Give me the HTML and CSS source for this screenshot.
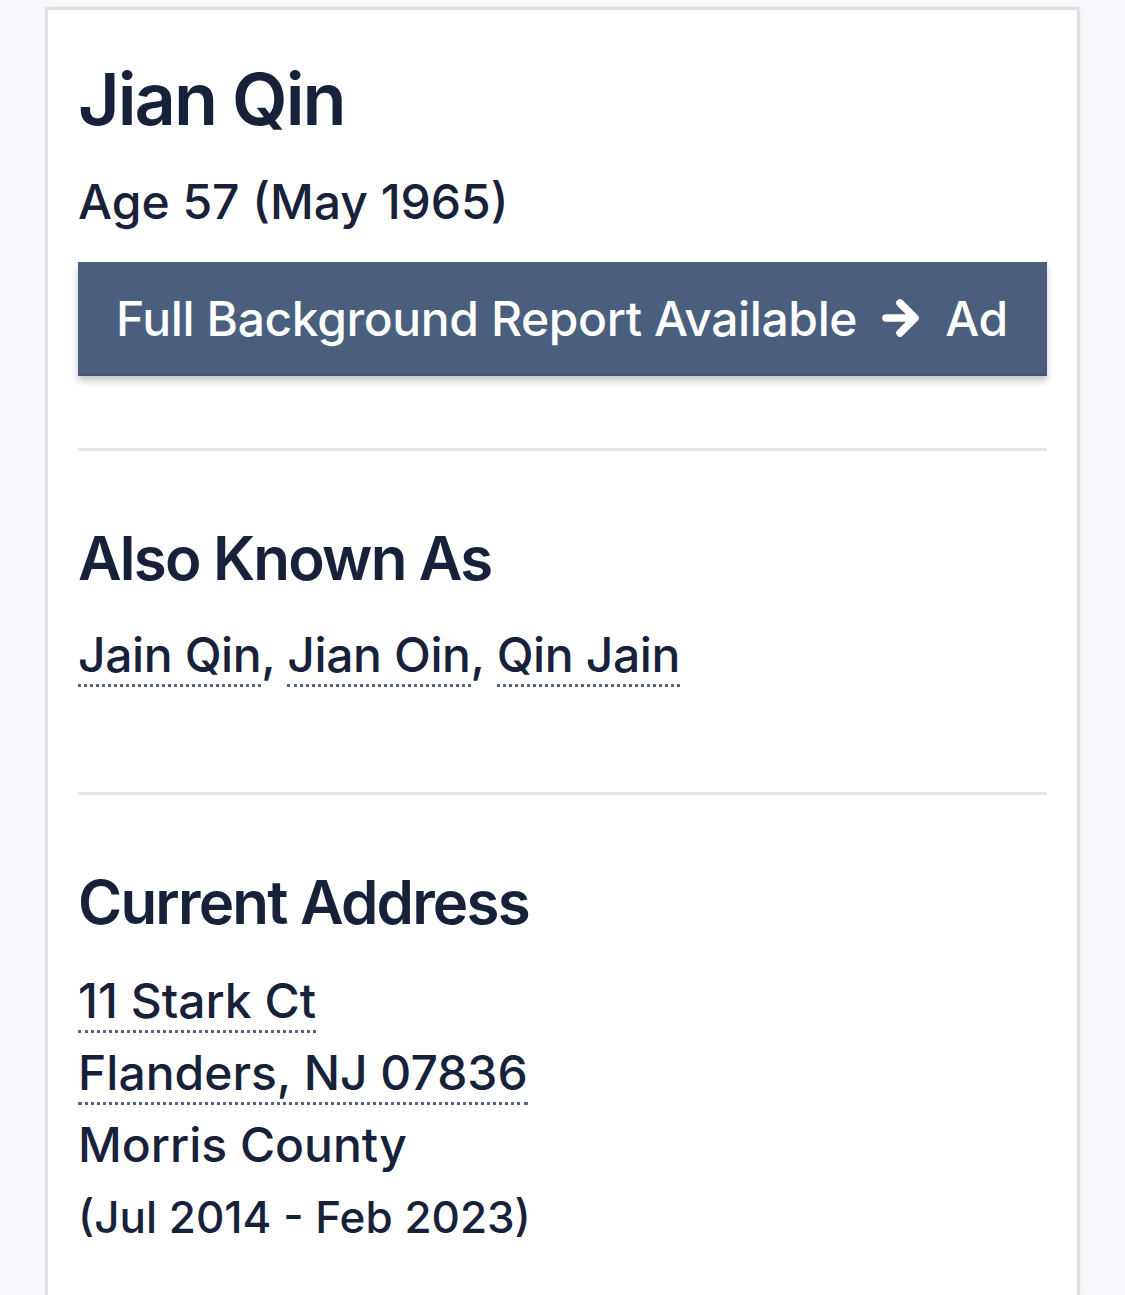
FILE: index.html
```html
<!DOCTYPE html>
<html lang="en">
<head>
<meta charset="utf-8">
<title>Jian Qin</title>
<link rel="stylesheet" href="styles.css">
</head>
<body>
<div class="card">
  <h1 class="name">Jian Qin</h1>
  <p class="age">Age 57 (May 1965)</p>
  <a class="report-btn" href="#">
    <span class="btn-text">Full Background Report Available</span>
    <svg class="arrow" viewBox="0 0 40 42" width="40" height="42" aria-hidden="true">
      <path d="M5 21 H32 M19 6 L34 21 L19 36" fill="none" stroke="#fff" stroke-width="7.5" stroke-linecap="round" stroke-linejoin="round"/>
    </svg>
    <span class="btn-ad">Ad</span>
  </a>
  <hr class="divider">
  <section class="section">
    <h2 class="heading">Also Known As</h2>
    <p class="aliases"><span class="dotted">Jain Qin</span>, <span class="dotted">Jian Oin</span>, <span class="dotted">Qin Jain</span></p>
  </section>
  <hr class="divider divider-2">
  <section class="section">
    <h2 class="heading">Current Address</h2>
    <div class="address">
      <div class="line"><span class="dotted">11 Stark Ct</span></div>
      <div class="line"><span class="dotted">Flanders, NJ 07836</span></div>
      <div class="line">Morris County</div>
      <div class="line dates">(Jul 2014 - Feb 2023)</div>
    </div>
  </section>
</div>
</body>
</html>
```

FILE: styles.css
```css
* { box-sizing: border-box; }
html, body {
  margin: 0;
  padding: 0;
  background: #f8f9fd;
}
body {
  font-family: Inter, "Noto Sans", "Liberation Sans", sans-serif;
  color: #17223a;
  height: 1295px;
  overflow: hidden;
}
.card {
  margin: 7px 0 0 45px;
  width: 1035px;
  height: 1288px;
  overflow: hidden;
  background: #fff;
  border: 3px solid #e0e0e2;
  border-bottom: 0;
  box-shadow: 0 0 5px rgba(0,0,0,0.06);
  padding: 46px 30px 0 30px;
}
.name {
  margin: 0;
  font-size: 72px;
  line-height: 86px;
  font-weight: 600;
  letter-spacing: -2px;
}
.age {
  margin: 31px 0 0 0;
  font-size: 48px;
  line-height: 58px;
  font-weight: 500;
}
.report-btn {
  margin-top: 31px;
  display: flex;
  align-items: center;
  height: 114px;
  padding: 0 38px 0 38px;
  background: #4a5f7d;
  color: #fff;
  text-decoration: none;
  font-size: 48px;
  font-weight: 500;
  letter-spacing: -0.4px;
  white-space: nowrap;
  box-shadow: 0 5px 7px rgba(0,0,0,0.22);
  border-bottom: 2px solid #43566f;
}
.btn-text {
  flex: none;
}
.arrow {
  margin-left: 24px;
  flex: none;
}
.btn-ad {
  flex: none;
  margin-left: 24px;
}
.divider {
  margin: 72px 0 0 0;
  border: 0;
  height: 3px;
  background: #e6e6e8;
}
.divider-2 {
  margin-top: 101px;
}
.heading {
  margin: 71px 0 0 0;
  font-size: 60px;
  line-height: 72px;
  font-weight: 600;
  letter-spacing: -1.8px;
}
.aliases {
  margin: 25px 0 0 0;
  font-size: 48px;
  line-height: 72px;
  font-weight: 500;
  letter-spacing: -0.4px;
}
.dotted {
  border-bottom: 3px dotted #56657c;
}
.address {
  margin-top: 27px;
  font-size: 48px;
  line-height: 72px;
  font-weight: 500;
}
.dates {
  font-size: 44px;
}
```
